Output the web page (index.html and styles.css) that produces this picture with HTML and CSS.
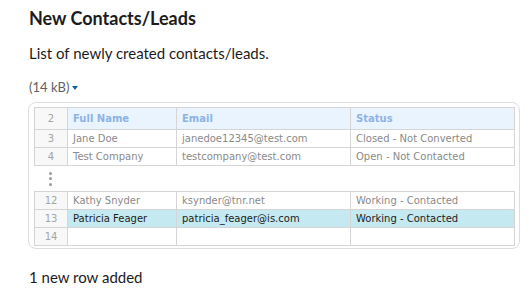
FILE: index.html
```html
<!DOCTYPE html>
<html>
<head>
<meta charset="utf-8">
<link rel="stylesheet" href="styles.css">
</head>
<body>
<div class="msg">
  <h1 class="title">New Contacts/Leads</h1>
  <p class="desc">List of newly created contacts/leads.</p>
  <div class="meta">(14 kB) <span class="caret"></span></div>
  <div class="card">
    <table class="sheet">
      <colgroup><col class="c-num"><col class="c-name"><col class="c-email"><col class="c-status"></colgroup>
      <tr class="head"><td class="num">2</td><td>Full Name</td><td>Email</td><td>Status</td></tr>
      <tr><td class="num">3</td><td>Jane Doe</td><td>janedoe12345@test.com</td><td>Closed - Not Converted</td></tr>
      <tr><td class="num">4</td><td>Test Company</td><td>testcompany@test.com</td><td>Open - Not Contacted</td></tr>
    </table>
    <div class="gap"><span class="dots"><i></i><i></i><i></i></span></div>
    <table class="sheet">
      <colgroup><col class="c-num"><col class="c-name"><col class="c-email"><col class="c-status"></colgroup>
      <tr><td class="num">12</td><td>Kathy Snyder</td><td>ksynder@tnr.net</td><td>Working - Contacted</td></tr>
      <tr class="new"><td class="num">13</td><td>Patricia Feager</td><td>patricia_feager@is.com</td><td>Working - Contacted</td></tr>
      <tr><td class="num">14</td><td></td><td></td><td></td></tr>
    </table>
  </div>
  <p class="added">1 new row added</p>
</div>
</body>
</html>
```
FILE: styles.css
```css
html, body { margin: 0; padding: 0; background: #fff; }
body { font-family: Lato, "Noto Sans", sans-serif; color: #1d1c1d; }
.msg { padding: 6px 0 0 29px; display: flex; flex-direction: column; align-items: flex-start; }
.title { margin: 0; font-size: 18px; line-height: 24px; font-weight: 700; }
.desc { margin: 12px 0 0; font-size: 15px; line-height: 22px; }
.meta { margin-top: 14px; font-size: 13px; line-height: 18px; color: #616061; display: flex; align-items: center; gap: 3px; }
.caret { width: 0; height: 0; border-left: 3.5px solid transparent; border-right: 3.5px solid transparent; border-top: 4px solid #1264a3; margin-top: 2px; }
.card { margin-top: 6px; margin-left: -1px; width: 481px; border: 1px solid #dddddd; border-radius: 8px; padding: 4px 4px 2px 5px; }
.sheet { border-collapse: collapse; table-layout: fixed; width: 480px; font-family: "DejaVu Sans", sans-serif; font-size: 10px; color: #8a8a8a; }
.c-num { width: 33px; }
.c-name { width: 109px; }
.c-email { width: 174px; }
.c-status { width: 164px; }
.sheet td { border: 1px solid #d5d5d5; height: 17px; padding: 0 0 0 5px; white-space: nowrap; overflow: hidden; vertical-align: middle; }
.sheet td.num { text-align: center; padding: 0; background: #f8f8f8; color: #a5a5a5; }
.head td { height: 21px; background: #eaf4fe; color: #8cb3e8; font-weight: 700; }
.head td.num { background: #f8f8f8; font-weight: 400; }
.new td { background: #c5e9f0; color: #1d1c1d; }
.new td.num { background: #f8f8f8; color: #a5a5a5; }
.gap { height: 25px; display: flex; align-items: center; padding-left: 15px; }
.dots { display: flex; flex-direction: column; gap: 2.5px; }
.dots i { display: block; width: 3px; height: 3px; border-radius: 50%; background: #9a9a9a; }
.added { margin: 17px 0 0; font-size: 15px; line-height: 22px; }
```
